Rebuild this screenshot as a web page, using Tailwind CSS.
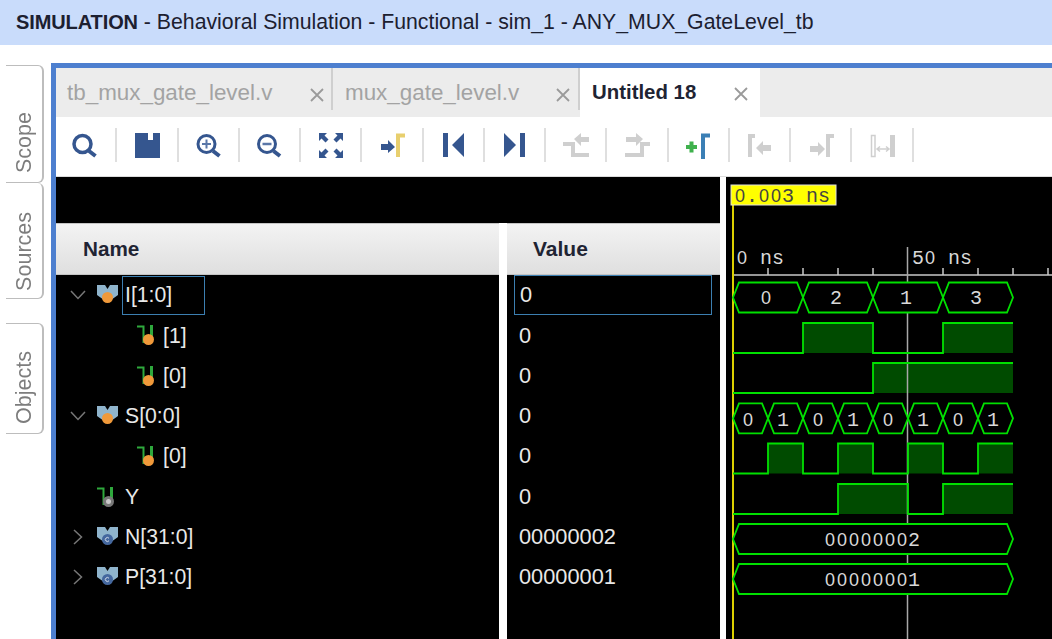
<!DOCTYPE html>
<html lang="en">
<head>
  <meta charset="UTF-8" />
  <title>Behavioral Simulation</title>
  <script src="https://cdn.jsdelivr.net/npm/@tailwindcss/browser@4"></script>
</head>
<body class="w-[1052px] h-[639px] overflow-hidden bg-white font-['Liberation_Sans',sans-serif] blur-[0.6px]">
  <svg class="hidden">
    <symbol id="bus" viewBox="0 0 22 20">
      <path d="M0 0H8L10.500 4L13 0H21V10L14 15H7L0 10Z" fill="#8fb4cc"/>
    </symbol>
    <symbol id="bus-const" viewBox="0 0 22 20">
      <path d="M0 0H8L10.500 4L13 0H21V10L14 15H7L0 10Z" fill="#8fb4cc"/>
      <circle cx="10.500" cy="12.500" r="5.500" fill="#44679e"/>
      <path d="M12 11.300A2 2 0 1 0 12 13.700" fill="none" stroke="#d5deec" stroke-width="1"/>
    </symbol>
    <symbol id="bit" viewBox="0 0 20 20">
      <path d="M0 1.500H6.500V17H10" fill="none" stroke="#2ea83c" stroke-width="2"/>
      <path d="M14.500 0V14" stroke="#2ea83c" stroke-width="3"/>
    </symbol>
  </svg>

  <!-- Title bar -->
  <header class="h-[45px] bg-[#c9dcfb] pl-4 flex items-center text-[21.250px] text-[#1c2030]">
    <span class="whitespace-pre"><b class="font-bold text-[20px] tracking-[-0.1px]">SIMULATION</b> - Behavioral Simulation - Functional - sim_1 - ANY_MUX_GateLevel_tb</span>
  </header>

  <div class="flex h-[594px] pt-[18px]">
    <!-- Left rail -->
    <aside class="w-[51px] shrink-0 flex flex-col pl-[6px] text-[21.500px] text-[#7d7d7d]">
      <div class="w-[38px] h-[118px] mt-[2px] pb-[9px] border-t border-b border-r-2 border-[#bdbdbd] rounded-r-md flex items-end justify-center">
        <span class="[writing-mode:vertical-rl] rotate-180">Scope</span>
      </div>
      <div class="w-[38px] h-[116px] pb-[7px] border-b border-r-2 border-[#bdbdbd] rounded-r-md flex items-end justify-center">
        <span class="[writing-mode:vertical-rl] rotate-180">Sources</span>
      </div>
      <div class="w-[38px] h-[111px] mt-[24px] pb-[9px] border-t border-b border-r-2 border-[#bdbdbd] rounded-r-md flex items-end justify-center">
        <span class="[writing-mode:vertical-rl] rotate-180">Objects</span>
      </div>
    </aside>

    <!-- Main panel -->
    <main class="flex-1 min-w-0 flex flex-col border-l-[5px] border-t-[5px] border-[#4d7fcf]">
      <!-- Tabs -->
      <nav class="h-[49px] shrink-0 bg-[#ececec] flex text-[22.400px]">
        <div class="w-[277px] h-[42px] border-r-2 border-[#cfcfcf] flex items-center justify-between pl-[11px] pr-[7px] text-[#a3a3a3] pt-[8px] box-border">
          <span>tb_mux_gate_level.v</span>
          <svg class="w-3.5 h-3.5 mt-1" viewBox="0 0 14 14"><path d="M1 1L13 13M13 1L1 13" stroke="#9a9a9a" stroke-width="1.800"/></svg>
        </div>
        <div class="w-[247px] h-[42px] border-r-2 border-[#cfcfcf] flex items-center justify-between pl-[12px] pr-[8px] text-[#a3a3a3] pt-[8px] box-border">
          <span>mux_gate_level.v</span>
          <svg class="w-3.5 h-3.5 mt-1" viewBox="0 0 14 14"><path d="M1 1L13 13M13 1L1 13" stroke="#9a9a9a" stroke-width="1.800"/></svg>
        </div>
        <div class="w-[180px] bg-white flex items-center pl-[12px] pb-[1px]">
          <b class="font-bold text-[20.400px] text-[#1f2433] w-[142px]">Untitled 18</b>
          <svg class="w-3.5 h-3.5 mt-1" viewBox="0 0 14 14"><path d="M1 1L13 13M13 1L1 13" stroke="#9a9a9a" stroke-width="1.800"/></svg>
        </div>
      </nav>

      <!-- Toolbar -->
      <div class="h-[60px] shrink-0 bg-white border-b border-[#dcdcdc] flex items-center pb-[3px] [&>div]:w-[61.250px] [&>div]:h-[34px] [&>div]:border-r-2 [&>div]:border-[#dfdfdf] [&>div]:flex [&>div]:items-center [&>div]:justify-center [&_svg]:w-8 [&_svg]:h-8">
        <div><svg viewBox="0 0 32 32" fill="none" stroke="#35568f"><circle cx="12.500" cy="15" r="8.500" stroke-width="3.500"/><path d="M19 22L25.500 27" stroke-width="4"/></svg></div>
        <div><svg viewBox="0 0 32 32"><path d="M4 4H17V11H22V4H29V29H4Z" fill="#35568f"/></svg></div>
        <div><svg viewBox="0 0 32 32" fill="none" stroke="#35568f"><circle cx="14.500" cy="15" r="8.500" stroke-width="3"/><path d="M21 22L27.500 27" stroke-width="4"/><path d="M10 15H19M14.500 10.500V19.500" stroke-width="2" stroke="#5a77a8"/></svg></div>
        <div><svg viewBox="0 0 32 32" fill="none" stroke="#35568f"><circle cx="14" cy="15" r="8.500" stroke-width="3"/><path d="M20.500 22L27 27" stroke-width="4"/><path d="M9.500 15H18.500" stroke-width="2.500" stroke="#5a77a8"/></svg></div>
        <div><svg viewBox="0 0 32 32" fill="#35568f"><path d="M4 4H12L9.500 6.500L13.500 10.500L10.500 13.500L6.500 9.500L4 12Z"/><path d="M28 4H20L22.500 6.500L18.500 10.500L21.500 13.500L25.500 9.500L28 12Z"/><path d="M4 29H12L9.500 26.500L13.500 22.500L10.500 19.500L6.500 23.500L4 21Z"/><path d="M28 29H20L22.500 26.500L18.500 22.500L21.500 19.500L25.500 23.500L28 21Z"/></svg></div>
        <div><svg viewBox="0 0 32 32"><path d="M5 15H12V11L19 18L12 24V21H5Z" fill="#35568f"/><path d="M22 28V6.500H29" fill="none" stroke="#e8cf6e" stroke-width="4"/></svg></div>
        <div><svg viewBox="0 0 32 32" fill="#35568f"><path d="M6 4H11V28H6ZM27 4V28L15 16Z"/></svg></div>
        <div><svg viewBox="0 0 32 32" fill="#35568f"><path d="M22 4H27V28H22ZM6 4V28L18 16Z"/></svg></div>
        <div><svg viewBox="0 0 32 32"><path d="M3 15H13V26H29" fill="none" stroke="#cfcfcf" stroke-width="4"/><path d="M14 10L21 4V8H29V13H21V17Z" fill="#cfcfcf"/></svg></div>
        <div><svg viewBox="0 0 32 32"><path d="M4 26H21V15H29" fill="none" stroke="#cfcfcf" stroke-width="4"/><path d="M22 10L15 4V8H5V13H15V17Z" fill="#cfcfcf"/></svg></div>
        <div><svg viewBox="0 0 32 32"><path d="M4 18H15M9.500 12.500V23.500" fill="none" stroke="#3fb14d" stroke-width="4"/><path d="M21 30V6.500H28" fill="none" stroke="#3b7fb5" stroke-width="4"/></svg></div>
        <div><svg viewBox="0 0 32 32"><path d="M7 28V7H12" fill="none" stroke="#cfcfcf" stroke-width="4"/><path d="M13 19L20 12V16H28V22H20V26Z" fill="#cfcfcf"/></svg></div>
        <div><svg viewBox="0 0 32 32"><path d="M23 28V7H29" fill="none" stroke="#cfcfcf" stroke-width="4"/><path d="M20 20L13 13V17H5V23H13V27Z" fill="#cfcfcf"/></svg></div>
        <div><svg viewBox="0 0 32 32"><rect x="5.500" y="6.500" width="3.500" height="21" fill="none" stroke="#cfcfcf" stroke-width="1.500"/><rect x="24" y="6" width="5" height="22" fill="#cfcfcf"/><path d="M11 20H23M14 17.500L11 20L14 22.500M20 17.500L23 20L20 22.500" fill="none" stroke="#cfcfcf" stroke-width="1.500"/></svg></div>
      </div>

      <!-- Wave window -->
      <section class="flex-1 min-h-0 flex bg-white">
        <div class="w-[664px] shrink-0 flex flex-col">
          <div class="h-[46px] shrink-0 bg-black"></div>
          <div class="flex-1 grid grid-cols-[443px_213px] gap-x-[8px] text-[21.200px] text-[#e8e8e8]">
            <!-- Names -->
            <div class="flex flex-col bg-black">
              <div class="h-[52px] shrink-0 border-t border-b border-[#c4c4c4] bg-gradient-to-b from-[#f3f3f3] to-[#dfdfdf] pl-[27px] flex items-center font-bold text-[20.700px] text-[#1f2433]">Name</div>
              <div class="h-[40.300px] flex items-center pl-[14px]">
                <svg class="w-4 h-4 mr-[11px]" viewBox="0 0 16 16"><path d="M1 4L8 11.500L15 4" fill="none" stroke="#777" stroke-width="1.500"/></svg>
                <span class="relative w-[22px] h-5"><svg class="w-[22px] h-5"><use href="#bus"/></svg><i class="absolute left-[5px] top-[7px] w-[11px] h-[11px] rounded-full bg-[#f0993a]"></i></span>
                <span class="ml-[3px] w-[83px] h-[39px] border border-[#3c7fb1] pl-[2px] flex items-center">I[1:0]</span>
              </div>
              <div class="h-[40.300px] flex items-center pl-[81px]">
                <span class="relative w-5 h-5"><svg class="w-5 h-5"><use href="#bit"/></svg><i class="absolute left-[6px] top-[9px] w-[11px] h-[11px] rounded-full bg-[#f0993a]"></i></span>
                <span class="ml-[6px]">[1]</span>
              </div>
              <div class="h-[40.300px] flex items-center pl-[81px]">
                <span class="relative w-5 h-5"><svg class="w-5 h-5"><use href="#bit"/></svg><i class="absolute left-[6px] top-[9px] w-[11px] h-[11px] rounded-full bg-[#f0993a]"></i></span>
                <span class="ml-[6px]">[0]</span>
              </div>
              <div class="h-[40.300px] flex items-center pl-[14px]">
                <svg class="w-4 h-4 mr-[11px]" viewBox="0 0 16 16"><path d="M1 4L8 11.500L15 4" fill="none" stroke="#777" stroke-width="1.500"/></svg>
                <span class="relative w-[22px] h-5"><svg class="w-[22px] h-5"><use href="#bus"/></svg><i class="absolute left-[5px] top-[7px] w-[11px] h-[11px] rounded-full bg-[#f0993a]"></i></span>
                <span class="ml-[6px]">S[0:0]</span>
              </div>
              <div class="h-[40.300px] flex items-center pl-[81px]">
                <span class="relative w-5 h-5"><svg class="w-5 h-5"><use href="#bit"/></svg><i class="absolute left-[6px] top-[9px] w-[11px] h-[11px] rounded-full bg-[#f0993a]"></i></span>
                <span class="ml-[6px]">[0]</span>
              </div>
              <div class="h-[40.300px] flex items-center pl-[41px]">
                <span class="relative w-5 h-5"><svg class="w-5 h-5"><use href="#bit"/></svg><i class="absolute left-[6px] top-[9px] w-[11px] h-[11px] rounded-full bg-[#c9c9c9] border-[3px] border-[#777]"></i></span>
                <span class="ml-[8px]">Y</span>
              </div>
              <div class="h-[40.300px] flex items-center pl-[14px]">
                <svg class="w-4 h-4 mr-[11px]" viewBox="0 0 16 16"><path d="M4 1L11.500 8L4 15" fill="none" stroke="#777" stroke-width="1.500"/></svg>
                <svg class="w-[22px] h-5"><use href="#bus-const"/></svg>
                <span class="ml-[6px]">N[31:0]</span>
              </div>
              <div class="h-[40.300px] flex items-center pl-[14px]">
                <svg class="w-4 h-4 mr-[11px]" viewBox="0 0 16 16"><path d="M4 1L11.500 8L4 15" fill="none" stroke="#777" stroke-width="1.500"/></svg>
                <svg class="w-[22px] h-5"><use href="#bus-const"/></svg>
                <span class="ml-[6px]">P[31:0]</span>
              </div>
            </div>
            <!-- Values -->
            <div class="flex flex-col bg-black text-[21.800px]">
              <div class="h-[52px] shrink-0 border-t border-b border-[#c4c4c4] bg-gradient-to-b from-[#f3f3f3] to-[#dfdfdf] pl-[26px] flex items-center font-bold text-[21px] text-[#1f2433]">Value</div>
              <div class="h-[40.300px] flex items-center pl-[7px]"><span class="w-[198px] h-[40px] border border-[#3c7fb1] pl-[5px] pt-[1px] flex items-center">0</span></div>
              <div class="h-[40.300px] flex items-center pl-[12px] pt-[1px]">0</div>
              <div class="h-[40.300px] flex items-center pl-[12px] pt-[1px]">0</div>
              <div class="h-[40.300px] flex items-center pl-[12px] pt-[1px]">0</div>
              <div class="h-[40.300px] flex items-center pl-[12px] pt-[1px]">0</div>
              <div class="h-[40.300px] flex items-center pl-[12px] pt-[1px]">0</div>
              <div class="h-[40.300px] flex items-center pl-[12px] pt-[1px]">00000002</div>
              <div class="h-[40.300px] flex items-center pl-[12px] pt-[1px]">00000001</div>
            </div>
          </div>
        </div>

        <!-- Waveform canvas, viewBox uses page coordinates -->
        <svg class="ml-[6px] w-[326px] h-[462px] bg-black shrink-0" viewBox="726 177 326 462" font-family="'Liberation Mono',monospace" font-size="20">
          <!-- fills -->
          <g fill="#004b00">
            <rect x="803" y="323" width="70" height="30"/><rect x="943" y="323" width="70" height="30"/>
            <rect x="873" y="363" width="140" height="30"/>
            <rect x="768" y="443.500" width="35" height="30"/><rect x="838" y="443.500" width="35" height="30"/><rect x="908" y="443.500" width="35" height="30"/><rect x="978" y="443.500" width="35" height="30"/>
            <rect x="838" y="484" width="70" height="30"/><rect x="943" y="484" width="70" height="30"/>
          </g>
          <!-- ruler and cursors -->
          <path d="M733 275H1052M768 268V275M803 268V275M838 268V275M873 268V275M943 268V275M978 268V275M1013 268V275M1048 268V275" stroke="#c8c8c8" stroke-width="1.500" fill="none"/>
          <path d="M907.500 247V639" stroke="#a8a8a8" stroke-width="1.500"/>
          <path d="M733 205V639" stroke="#dcd000" stroke-width="2"/>
          <!-- buses -->
          <g fill="#000" stroke="#00e000" stroke-width="1.800">
            <path d="M733 297.500L739 282.500H797L803 297.500L797 312.500H739Z"/>
            <path d="M803 297.500L809 282.500H867L873 297.500L867 312.500H809Z"/>
            <path d="M873 297.500L879 282.500H937L943 297.500L937 312.500H879Z"/>
            <path d="M943 297.500L949 282.500H1007L1013 297.500L1007 312.500H949Z"/>
            <path d="M733 418.300L739 403.300H762L768 418.300L762 433.300H739Z"/>
            <path d="M768 418.300L774 403.300H797L803 418.300L797 433.300H774Z"/>
            <path d="M803 418.300L809 403.300H832L838 418.300L832 433.300H809Z"/>
            <path d="M838 418.300L844 403.300H867L873 418.300L867 433.300H844Z"/>
            <path d="M873 418.300L879 403.300H902L908 418.300L902 433.300H879Z"/>
            <path d="M908 418.300L914 403.300H937L943 418.300L937 433.300H914Z"/>
            <path d="M943 418.300L949 403.300H972L978 418.300L972 433.300H949Z"/>
            <path d="M978 418.300L984 403.300H1007L1013 418.300L1007 433.300H984Z"/>
            <path d="M733 539L739 524H1007L1013 539L1007 554H739Z"/>
            <path d="M733 579L739 564H1007L1013 579L1007 594H739Z"/>
          </g>
          <!-- digital traces -->
          <g fill="none" stroke="#00e000" stroke-width="1.800">
            <path d="M733 353H803V323H873V353H943V323H1013"/>
            <path d="M733 393H873V363H1013"/>
            <path d="M733 473.500H768V443.500H803V473.500H838V443.500H873V473.500H908V443.500H943V473.500H978V443.500H1013"/>
            <path d="M733 514H838V484H908V514H943V484H1013"/>
          </g>
          <!-- marker label: zeros come from Liberation Sans because the mono zero has a dot -->
          <rect x="731" y="185" width="105" height="20" fill="#ffff00" stroke="#e0e0e0"/>
          <text y="201.500" fill="#444"><tspan x="735" font-family="'Liberation Sans',sans-serif" font-size="18">0</tspan><tspan x="746">.</tspan><tspan x="759 771" font-family="'Liberation Sans',sans-serif" font-size="18">00</tspan><tspan x="782 794 806 818">3 ns</tspan></text>
          <g fill="#d8d8d8">
            <text y="263.500"><tspan x="737" font-family="'Liberation Sans',sans-serif" font-size="18">0</tspan><tspan x="760">ns</tspan></text>
            <text y="263.500"><tspan x="912">5</tspan><tspan x="925" font-family="'Liberation Sans',sans-serif" font-size="18">0</tspan><tspan x="948">ns</tspan></text>
            <g text-anchor="middle" font-family="'Liberation Sans',sans-serif" font-size="18">
              <text x="766" y="304">0</text>
              <text x="748" y="425.500">0</text>
              <text x="818" y="425.500">0</text>
              <text x="888" y="425.500">0</text>
              <text x="958" y="425.500">0</text>
            </g>
            <g text-anchor="middle">
              <text x="836" y="304">2</text>
              <text x="906" y="304">1</text>
              <text x="976" y="304">3</text>
              <text x="783" y="425.500">1</text>
              <text x="853" y="425.500">1</text>
              <text x="923" y="425.500">1</text>
              <text x="993" y="425.500">1</text>
            </g>
            <text y="546"><tspan x="825 837 849 861 873 885 897" font-family="'Liberation Sans',sans-serif" font-size="18">0000000</tspan><tspan x="908">2</tspan></text>
            <text y="586"><tspan x="825 837 849 861 873 885 897" font-family="'Liberation Sans',sans-serif" font-size="18">0000000</tspan><tspan x="908">1</tspan></text>
          </g>
        </svg>
      </section>
    </main>
  </div>
</body>
</html>
